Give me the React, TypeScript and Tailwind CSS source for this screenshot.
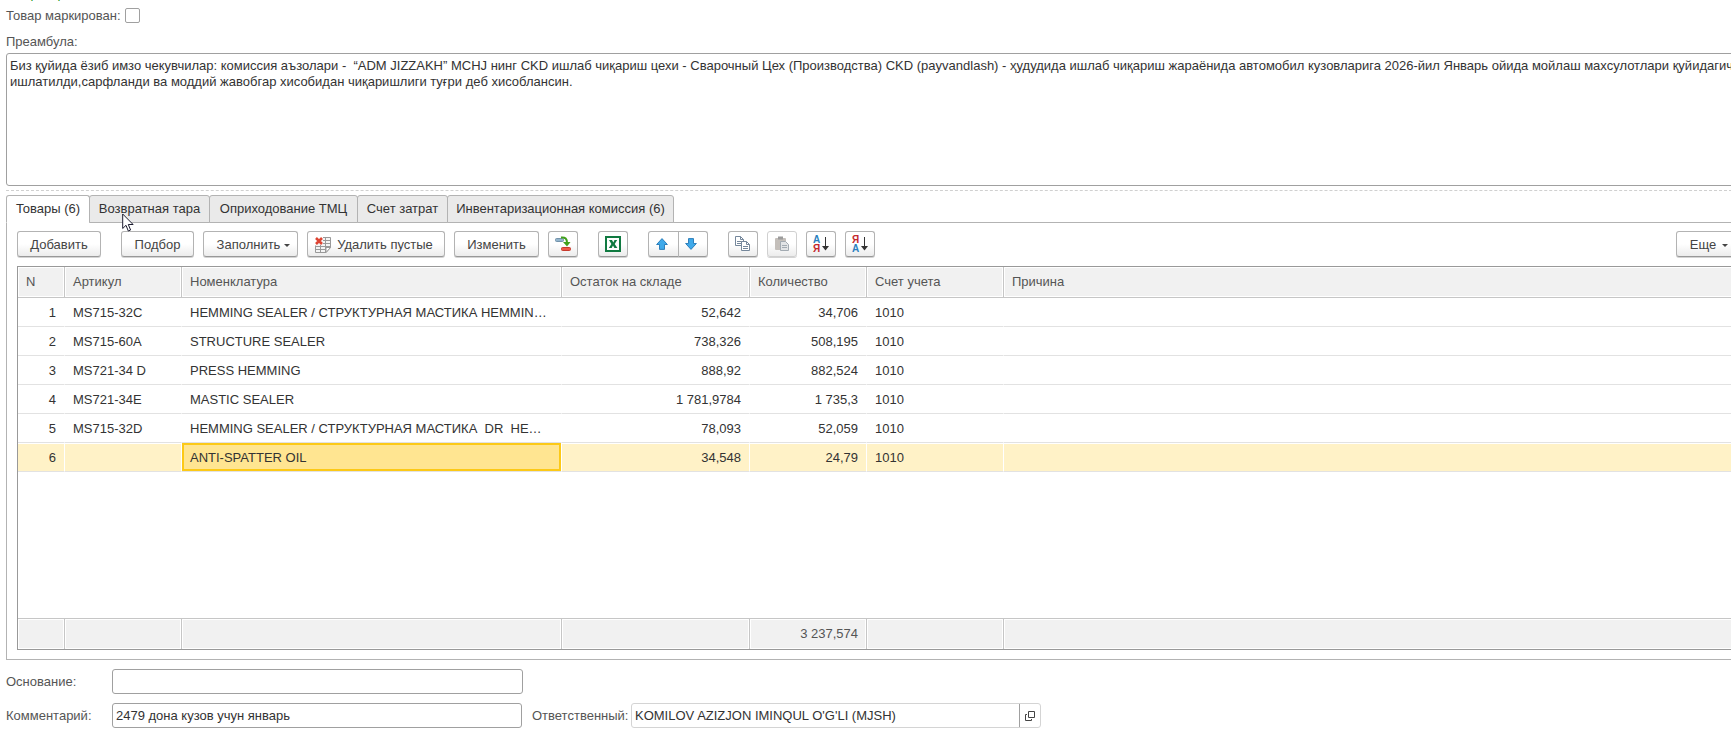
import { useState } from "react";
import { clsx } from "clsx";

interface Item {
  n: number;
  article: string;
  name: string;
  stock: string;
  qty: string;
  account: string;
  reason: string;
}

const items: Item[] = [
  { n: 1, article: "MS715-32C", name: "HEMMING SEALER / СТРУКТУРНАЯ МАСТИКА HEMMIN…", stock: "52,642", qty: "34,706", account: "1010", reason: "" },
  { n: 2, article: "MS715-60A", name: "STRUCTURE SEALER", stock: "738,326", qty: "508,195", account: "1010", reason: "" },
  { n: 3, article: "MS721-34 D", name: "PRESS HEMMING", stock: "888,92", qty: "882,524", account: "1010", reason: "" },
  { n: 4, article: "MS721-34E", name: "MASTIC SEALER", stock: "1 781,9784", qty: "1 735,3", account: "1010", reason: "" },
  { n: 5, article: "MS715-32D", name: "HEMMING SEALER / СТРУКТУРНАЯ МАСТИКА  DR  HE…", stock: "78,093", qty: "52,059", account: "1010", reason: "" },
  { n: 6, article: "", name: "ANTI-SPATTER OIL", stock: "34,548", qty: "24,79", account: "1010", reason: "" },
];

const tabs = [
  { title: "Товары (6)", width: "w-[84px]" },
  { title: "Возвратная тара", width: "w-[121px]" },
  { title: "Оприходование ТМЦ", width: "w-[149px]" },
  { title: "Счет затрат", width: "w-[91px]" },
  { title: "Инвентаризационная комиссия (6)", width: "w-[227px]" },
];

const columns = [
  { title: "N", width: "w-[47px]", total: "" },
  { title: "Артикул", width: "w-[117px]", total: "" },
  { title: "Номенклатура", width: "w-[380px]", total: "" },
  { title: "Остаток на складе", width: "w-[188px]", total: "" },
  { title: "Количество", width: "w-[117px]", total: "3 237,574" },
  { title: "Счет учета", width: "w-[137px]", total: "" },
  { title: "Причина", width: "", total: "" },
];

const preamble =
  "Биз қуйида ёзиб имзо чекувчилар: комиссия аъзолари -  “ADM JIZZAKH” MCHJ нинг CKD ишлаб чиқариш цехи - Сварочный Цех (Производства) CKD (payvandlash) - ҳудудида ишлаб чиқариш жараёнида автомобил кузовларига 2026-йил Январь ойида мойлаш махсулотлари қуйидагича\nишлатилди,сарфланди ва моддий жавобгар хисобидан чиқаришлиги туғри деб хисоблансин.";

const inputStyle = "h-[25px] rounded-[3px] border border-[#a0a0a0] bg-white px-[3px] outline-none";

interface ToolButtonProps {
  children: React.ReactNode;
  className?: string;
  label?: string;
  disabled?: boolean;
  onClick?: () => void;
}

const ToolButton = ({ children, className, label, disabled, onClick }: ToolButtonProps) => (
  <button
    type="button"
    aria-label={label}
    disabled={disabled}
    onClick={onClick}
    className={clsx(
      "flex h-[26px] shrink-0 items-center justify-center border bg-linear-to-b from-white from-50% to-[#ececec] text-[#444] shadow-[0_1px_0_#d4d4d4]",
      disabled ? "border-[#d0d0d0]" : "border-[#b3b3b3] border-b-[#999]",
      className
    )}
  >
    {children}
  </button>
);

const Caret = () => (
  <svg width="6" height="3" viewBox="0 0 6 3" className="mt-0.5 shrink-0" fill="#444">
    <path d="M0 0h6L3 3z" />
  </svg>
);

const ClearIcon = () => (
  <svg width="16" height="16" viewBox="0 0 16 16" fill="none" className="shrink-0">
    <path d="M8 .5h7.500v10l-4.500 5H.5v-7" fill="#f4f4f4" stroke="#999" />
    <path d="M8 3.500h7M8 6.500h7M1 9.500h14M1 12.500h10M5.500 8v7M10.500 1v14" stroke="#999" />
    <path d="M15.500 10.500h-4.500v5z" fill="#fff" stroke="#999" />
    <path d="M1 1l6 6M7 1L1 7" stroke="#dd4433" strokeWidth="2.600" />
  </svg>
);

const MoveIcon = () => (
  <svg width="18" height="16" viewBox="0 0 18 16">
    <rect x="1.500" y="2.500" width="8" height="3" rx="1" fill="#93b5cd" stroke="#7393ab" />
    <path d="M7 1.500c4.500-.5 6 1.500 6 5.500" fill="none" stroke="#42a01c" strokeWidth="2" />
    <path d="M9 6h7.500L13 10.500z" fill="#42a01c" />
    <rect x="7.500" y="11.500" width="9" height="3" rx="1" fill="#ef5648" stroke="#c73a2d" />
  </svg>
);

const ExcelIcon = () => (
  <svg width="16" height="16" viewBox="0 0 16 16">
    <rect x="1" y="1" width="14" height="14" fill="#fff" stroke="#107a41" strokeWidth="2" />
    <path d="M4 4h3l1.300 2.500L9.500 4h2.700L9.700 8l2.700 4h-3L8 9.500 6.700 12H3.800l2.600-4z" fill="#107a41" />
  </svg>
);

const ArrowIcon = ({ down }: { down?: boolean }) => (
  <svg width="12" height="12" viewBox="0 0 12 12" className={clsx(down && "rotate-180")}>
    <path d="M6 .6l5.400 5.900H8.500v4.900h-5V6.500H.6z" fill="#3fa9ea" stroke="#2277b5" strokeWidth="0.900" />
  </svg>
);

const CopyIcon = () => (
  <svg width="16" height="16" viewBox="0 0 16 16" fill="#fff" stroke="#75879b">
    <path d="M.5.5h5l3 3v6h-8z" />
    <path d="M5.500.5v3h3M2 5.500h5M2 7.500h5" fill="none" />
    <path d="M6.500 5.500h5l3 3v6h-8z" />
    <path d="M11.500 5.500v3h3M8 10.500h5M8 12.500h5" fill="none" />
  </svg>
);

const PasteIcon = () => (
  <svg width="16" height="16" viewBox="0 0 16 16">
    <rect x="1" y="2" width="11" height="12" rx="1" fill="#c4bfba" />
    <rect x="4" y="0.500" width="5" height="3" fill="#9c9c9c" />
    <path d="M6.500 5.500h5l3 3v6h-8z" fill="#e2e4e6" stroke="#a3abb2" />
    <path d="M8 9.500h5M8 11.500h5" stroke="#a3abb2" />
  </svg>
);

// Two stacked letters next to a downward arrow
const SortIcon = ({ reverse }: { reverse?: boolean }) => (
  <span className="flex items-center gap-0.5">
    <span className="flex flex-col text-[10px] leading-[9px] font-bold">
      <span className={reverse ? "text-[#c4282d]" : "text-[#2a7fc0]"}>{reverse ? "Я" : "А"}</span>
      <span className={reverse ? "text-[#2a7fc0]" : "text-[#c4282d]"}>{reverse ? "А" : "Я"}</span>
    </span>
    <svg width="7" height="14" viewBox="0 0 7 14">
      <path d="M3.500 0v10" stroke="#333" />
      <path d="M0 9h7l-3.500 4.500z" fill="#333" />
    </svg>
  </span>
);

const OpenIcon = () => (
  <svg width="10" height="10" viewBox="0 0 10 10" fill="none" stroke="#444">
    <path d="M3.500.5h6v6h-6z" />
    <path d="M2 3.500H.5v6h6V8" />
  </svg>
);

const Cursor = () => (
  <svg width="13" height="20" viewBox="0 0 13 20" className="pointer-events-none absolute top-[18px] left-[116px] z-20">
    <path d="M.7 1v14.500l3.300-3.200 2.300 5.700 2.300-1-2.300-5.500h4.800z" fill="#fff" stroke="#1c1c30" />
  </svg>
);

const Toolbar = () => (
  <div className="flex items-center">
    <ToolButton className="w-[84px] rounded-[3px] pt-px">Добавить</ToolButton>
    <ToolButton className="ml-5 w-[73px] rounded-[3px] pt-px">Подбор</ToolButton>
    <ToolButton className="ml-[9px] w-[95px] gap-1 rounded-[3px] pt-px pl-1.5">
      Заполнить <Caret />
    </ToolButton>
    <ToolButton className="ml-[9px] w-[138px] gap-1.5 rounded-[3px] pt-px pr-1">
      <ClearIcon /> Удалить пустые
    </ToolButton>
    <ToolButton className="ml-[9px] w-[85px] rounded-[3px] pt-px">Изменить</ToolButton>
    <ToolButton label="Перенести" className="ml-[9px] w-[30px] rounded-[3px]"><MoveIcon /></ToolButton>
    <ToolButton label="Excel" className="ml-5 w-[30px] rounded-[3px]"><ExcelIcon /></ToolButton>
    <ToolButton label="Вверх" className="ml-5 w-[31px] rounded-l-[3px] pr-1"><ArrowIcon /></ToolButton>
    <ToolButton label="Вниз" className="-ml-px w-[30px] rounded-r-[3px] pr-1"><ArrowIcon down /></ToolButton>
    <ToolButton label="Копировать" className="ml-5 w-[30px] rounded-[3px]"><CopyIcon /></ToolButton>
    <ToolButton label="Вставить" disabled className="ml-[9px] w-[30px] rounded-[3px]"><PasteIcon /></ToolButton>
    <ToolButton label="По возрастанию" className="ml-[9px] w-[30px] rounded-[3px]"><SortIcon /></ToolButton>
    <ToolButton label="По убыванию" className="ml-[9px] w-[30px] rounded-[3px]"><SortIcon reverse /></ToolButton>
    <ToolButton className="ml-auto w-[60px] gap-1.5 rounded-[3px] pt-px pl-1.5">
      Еще <Caret />
    </ToolButton>
  </div>
);

const ItemsTable = () => {
  const [selected, setSelected] = useState(6);

  return (
    <div className="mt-[9px] border border-[#999]">
      <table className="w-full table-fixed border-separate border-spacing-0">
        <thead>
          <tr>
            {columns.map((column) => (
              <th
                key={column.title}
                className={clsx(
                  "h-[31px] border-r border-b border-[#c6c6c6] bg-[#f1f1f1] p-0 pl-2 text-left font-normal text-[#555] shadow-[inset_0_0_0_1px_#fff]",
                  column.width
                )}
              >
                {column.title}
              </th>
            ))}
          </tr>
        </thead>
        <tbody>
          {items.map((item) => {
            const active = item.n === selected;
            const cell = "h-[29px] border-r border-b border-r-white border-b-[#e2e2e2] bg-clip-padding p-0 pt-0.5 whitespace-pre";
            const fill = active && "bg-[#fff2c7] shadow-[inset_0_1px_0_#fff]";
            return (
              <tr key={item.n} onClick={() => setSelected(item.n)}>
                <td className={clsx(cell, fill, "pr-2 text-right")}>{item.n}</td>
                <td className={clsx(cell, fill, "pl-2")}>{item.article}</td>
                <td className={clsx(cell, "overflow-hidden pl-2", active && "bg-[#ffe591] shadow-[inset_0_0_0_2px_#fcc917]")}>
                  {item.name}
                </td>
                <td className={clsx(cell, fill, "pr-2 text-right")}>{item.stock}</td>
                <td className={clsx(cell, fill, "pr-2 text-right")}>{item.qty}</td>
                <td className={clsx(cell, fill, "pl-2")}>{item.account}</td>
                <td className={clsx(cell, fill, "pl-2")}>{item.reason}</td>
              </tr>
            );
          })}
          <tr>
            <td colSpan={columns.length} className="h-[146px] p-0" />
          </tr>
        </tbody>
        <tfoot>
          <tr>
            {columns.map((column) => (
              <td
                key={column.title}
                className="h-[31px] border-t border-r border-[#c6c6c6] bg-[#f1f1f1] p-0 pr-2 text-right text-[#555] shadow-[inset_0_0_0_1px_#fff]"
              >
                {column.total}
              </td>
            ))}
          </tr>
        </tfoot>
      </table>
    </div>
  );
};

const App = () => {
  const [activeTab, setActiveTab] = useState(0);

  return (
    <div className="overflow-hidden bg-white pb-[3px] pl-1.5 font-['Liberation_Sans',Arial,sans-serif] text-[13px] leading-4 text-[#333]">
      <div className="-mr-4">
        <div className="flex h-[2px] items-end overflow-hidden text-[#1a9a1a]">Оператор</div>

        <div className="mt-1.5 flex items-start">
          <label htmlFor="marked" className="w-[119px] text-[#555]">Товар маркирован:</label>
          <input id="marked" type="checkbox" className="h-[15px] w-[15px] appearance-none rounded-xs border border-[#a0a0a0] bg-white" />
        </div>

        <label htmlFor="preamble" className="mt-2.5 block text-[#555]">Преамбула:</label>
        <textarea
          id="preamble"
          defaultValue={preamble}
          className="mt-[3px] block h-[133px] w-[calc(100%+16px)] resize-none rounded-[3px] border border-[#a0a0a0] px-[3px] py-1 outline-none"
        />

        <div className="mt-1 border-t border-dashed border-[#d0d0d0]" />

        <div className="relative mt-1">
          <div role="tablist" className="relative z-10 flex">
            {tabs.map((tab, index) => (
              <button
                key={tab.title}
                type="button"
                role="tab"
                aria-selected={activeTab === index}
                onClick={() => setActiveTab(index)}
                className={clsx(
                  "-mr-px h-7 rounded-t-[3px] border border-[#b3b3b3] whitespace-nowrap",
                  tab.width,
                  activeTab === index ? "border-b-white bg-white" : "bg-[#eaeaea]"
                )}
              >
                {tab.title}
              </button>
            ))}
          </div>
          <Cursor />

          <div className="-mt-px border border-[#b3b3b3] px-[10px] pt-2 pb-[9px]">
            <Toolbar />
            <ItemsTable />
          </div>
        </div>

        <div className="mt-[9px] flex items-center">
          <label htmlFor="basis" className="w-[106px] text-[#555]">Основание:</label>
          <input id="basis" type="text" className={clsx(inputStyle, "w-[411px]")} />
        </div>

        <div className="mt-[9px] flex items-center">
          <label htmlFor="comment" className="w-[106px] text-[#555]">Комментарий:</label>
          <input id="comment" type="text" defaultValue="2479 дона кузов учун январь" className={clsx(inputStyle, "w-[410px]")} />
          <label htmlFor="responsible" className="ml-2.5 w-[99px] text-[#555]">Ответственный:</label>
          <div className="flex h-[25px] w-[410px] rounded-[3px] border border-[#d4d4d4]">
            <input
              id="responsible"
              type="text"
              defaultValue="KOMILOV AZIZJON IMINQUL O'G'LI (MJSH)"
              className="min-w-0 flex-1 px-[3px] outline-none"
            />
            <button type="button" aria-label="Открыть" className="flex w-[21px] items-center justify-center border-l border-[#a0a0a0]">
              <OpenIcon />
            </button>
          </div>
        </div>
      </div>
    </div>
  );
};

export default App;
